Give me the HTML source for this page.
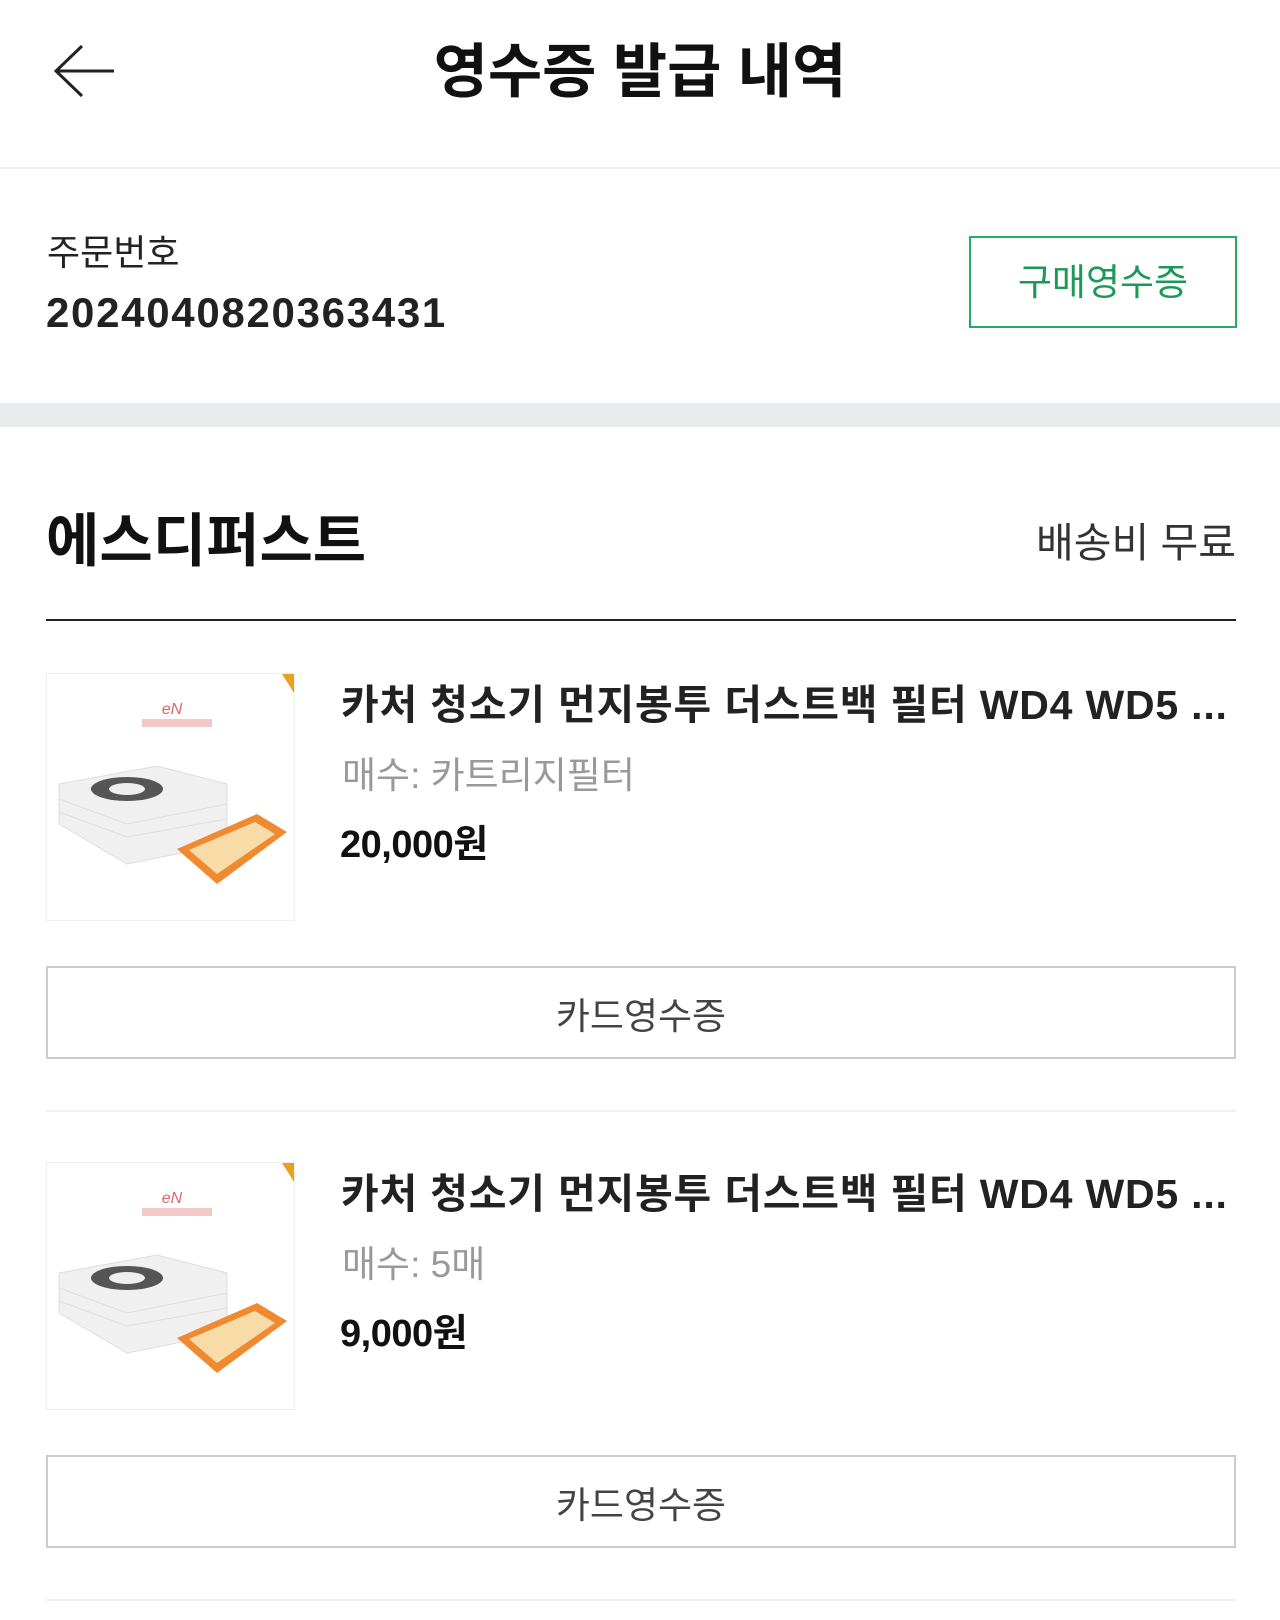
<!DOCTYPE html>
<html><head><meta charset="utf-8"><style>
*{margin:0;padding:0;box-sizing:border-box}
body{width:1280px;height:1620px;background:#fff;position:relative;overflow:hidden;font-family:"Liberation Sans","Noto Sans CJK KR",sans-serif;color:#222}
.a{position:absolute;white-space:nowrap;line-height:1}
.btn{position:absolute;left:46px;width:1190px;height:93px;border:2px solid #ccc;display:flex;align-items:center;justify-content:center;font-size:37px;color:#444}
.img{position:absolute;left:46px;width:249px;height:248px;border:1px solid #eee;overflow:hidden}
</style></head><body>
<svg class="a" style="left:54px;top:44px" width="64" height="54" viewBox="0 0 64 54"><path d="M2 27H60M28 2L2 27L28 52" fill="none" stroke="#222" stroke-width="3"/></svg>
<div class="a" style="left:0;width:1280px;text-align:center;top:43px;font-size:59px;font-weight:bold;color:#111">영수증 발급 내역</div>
<div class="a" style="left:0;top:167px;width:1280px;height:2px;background:#eee"></div>
<div class="a" style="left:47px;top:235px;font-size:36px;color:#222">주문번호</div>
<div class="a" style="left:46px;top:292px;font-size:42px;font-weight:bold;color:#222;letter-spacing:1.7px">2024040820363431</div>
<div class="a" style="left:969px;top:236px;width:268px;height:92px;border:2px solid #2aa866;color:#1a9a55;font-size:37px;display:flex;align-items:center;justify-content:center">구매영수증</div>
<div class="a" style="left:0;top:403px;width:1280px;height:24px;background:#e9ebed"></div>
<div class="a" style="left:46px;top:513px;font-size:58px;font-weight:bold;color:#111">에스디퍼스트</div>
<div class="a" style="right:44px;top:523px;font-size:41px;color:#333">배송비 무료</div>
<div class="a" style="left:46px;top:619px;width:1190px;height:2px;background:#222"></div>

<div class="img" style="top:673px"><svg width="249" height="248" viewBox="0 0 249 248"><polygon points="235,0 249,0 249,22" fill="#e8a020"/><text x="125" y="40" font-size="16" fill="#d66" text-anchor="middle" font-style="italic">eN</text><rect x="95" y="45" width="70" height="8" fill="#f3c8c8"/><polygon points="12,110 110,92 180,110 180,170 80,190 12,150" fill="#f0f0f0" stroke="#ddd"/><path d="M12 125 L80 150 L180 130 M12 138 L80 163 L180 145" stroke="#ddd" fill="none"/><ellipse cx="80" cy="115" rx="36" ry="12" fill="#555"/><ellipse cx="80" cy="115" rx="18" ry="6" fill="#eee"/><polygon points="130,175 210,140 240,158 170,210" fill="#f08a30"/><polygon points="142,176 208,148 228,160 170,200" fill="#f7dca8"/></svg></div>
<div class="a" style="left:341px;top:685px;font-size:41px;font-weight:bold;color:#222;letter-spacing:0.8px">카처 청소기 먼지봉투 더스트백 필터 WD4 WD5 ...</div>
<div class="a" style="left:342px;top:757px;font-size:37px;color:#999">매수: 카트리지필터</div>
<div class="a" style="left:340px;top:826px;font-size:38px;font-weight:bold;color:#111;letter-spacing:-0.5px">20,000원</div>
<div class="btn" style="top:966px">카드영수증</div>
<div class="a" style="left:46px;top:1110px;width:1190px;height:2px;background:#f0f0f0"></div>

<div class="img" style="top:1162px"><svg width="249" height="248" viewBox="0 0 249 248"><polygon points="235,0 249,0 249,22" fill="#e8a020"/><text x="125" y="40" font-size="16" fill="#d66" text-anchor="middle" font-style="italic">eN</text><rect x="95" y="45" width="70" height="8" fill="#f3c8c8"/><polygon points="12,110 110,92 180,110 180,170 80,190 12,150" fill="#f0f0f0" stroke="#ddd"/><path d="M12 125 L80 150 L180 130 M12 138 L80 163 L180 145" stroke="#ddd" fill="none"/><ellipse cx="80" cy="115" rx="36" ry="12" fill="#555"/><ellipse cx="80" cy="115" rx="18" ry="6" fill="#eee"/><polygon points="130,175 210,140 240,158 170,210" fill="#f08a30"/><polygon points="142,176 208,148 228,160 170,200" fill="#f7dca8"/></svg></div>
<div class="a" style="left:341px;top:1174px;font-size:41px;font-weight:bold;color:#222;letter-spacing:0.8px">카처 청소기 먼지봉투 더스트백 필터 WD4 WD5 ...</div>
<div class="a" style="left:342px;top:1246px;font-size:37px;color:#999">매수: 5매</div>
<div class="a" style="left:340px;top:1315px;font-size:38px;font-weight:bold;color:#111;letter-spacing:-0.5px">9,000원</div>
<div class="btn" style="top:1455px">카드영수증</div>
<div class="a" style="left:46px;top:1599px;width:1190px;height:2px;background:#f0f0f0"></div>
</body></html>
